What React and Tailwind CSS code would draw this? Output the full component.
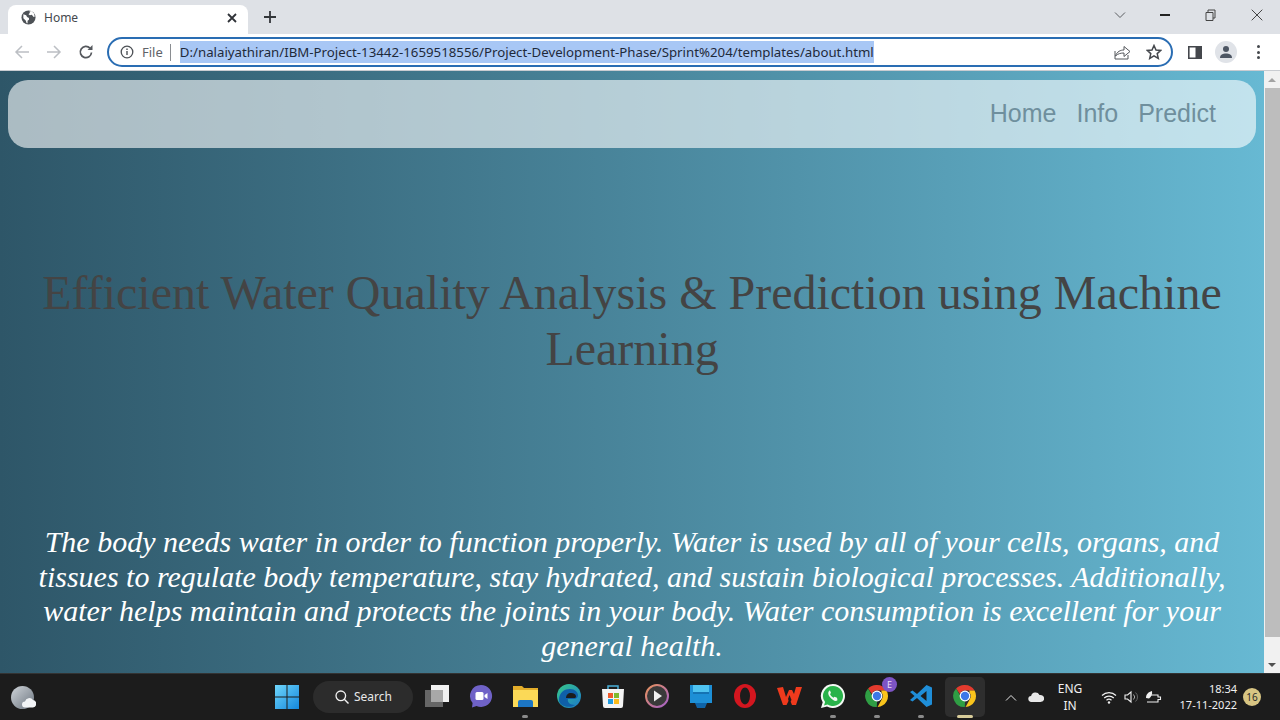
import React from "react";

const Cell = ({ children, dot, active }) => (
  <div className="relative flex h-[40px] w-[44px] items-center justify-center">
    {active && <div className="absolute inset-y-0 left-[2px] right-[2px] rounded-[5px] bg-[#2e2e2e]" />}
    <div className="relative top-[-1px] flex items-center justify-center">{children}</div>
    {dot && !active && <div className="absolute bottom-[-1px] left-[19px] h-[3px] w-[6px] rounded-full bg-[#8b8b8b]" />}
    {active && <div className="absolute bottom-[-1px] left-[14px] h-[3px] w-[16px] rounded-full bg-[#d8cc9a]" />}
  </div>
);

const ChromeLogo = ({ size = 24 }) => (
  <svg width={size} height={size} viewBox="0 0 24 24">
    <path d="M12 1a11 11 0 0 1 9.530 5.500H12a5.500 5.500 0 0 0-5.100 3.400L3.100 4.600A11 11 0 0 1 12 1z" fill="#e33b2e" />
    <path d="M21.530 6.500A11 11 0 0 1 12.600 23l4.200-7.800A5.500 5.500 0 0 0 16.800 9l-.6-2.500z" fill="#f9c41c" />
    <path d="M3.100 4.600l4.300 7.400L12 17.500l-.2 5.500A11 11 0 0 1 3.100 4.600z" fill="#2f9e44" />
    <circle cx="12" cy="12" r="5.400" fill="#fff" />
    <circle cx="12" cy="12" r="4.200" fill="#3b78e7" />
  </svg>
);

export default function App() {
  return (
    <div className="flex h-[720px] w-[1280px] flex-col overflow-hidden bg-[#dee1e6] font-['Noto_Sans',sans-serif]">
      {/* Tab strip */}
      <div className="flex h-[34px] shrink-0 items-end bg-[#dee1e6]">
        <div className="ml-[8px] flex h-[29px] w-[240px] items-center rounded-t-[8px] bg-white pb-[4px] pl-[13px] pr-[10px]">
          <svg width="15" height="15" viewBox="0 0 16 16">
            <circle cx="8" cy="8" r="7.500" fill="#4d5156" />
            <path d="M2.500 4.500l3 1 1 2 2 1v2l-1.500 1v2.500l-1 .2-1-3-2.500-2.500zM9 1.500l.5 1.500-1.500 1.500 1.500 1 2-.5 2 2.500 1.200-.5-1-3.500-2.500-2.500z" fill="#fff" />
          </svg>
          <span className="ml-[8px] text-[12px] leading-none text-[#45494e]">Home</span>
          <svg className="ml-auto" width="12" height="12" viewBox="0 0 12 12">
            <path d="M2 2l8 8M10 2l-8 8" stroke="#2f3237" strokeWidth="1.800" />
          </svg>
        </div>
        <svg className="mb-[10px] ml-[15px]" width="14" height="14" viewBox="0 0 14 14">
          <path d="M7 1v12M1 7h12" stroke="#33363a" strokeWidth="1.800" />
        </svg>
        <div className="ml-auto mb-[13px] flex items-center">
          <svg width="12" height="8" viewBox="0 0 12 8"><path d="M1 1.500l5 5 5-5" fill="none" stroke="#5a5d61" strokeWidth="1" /></svg>
          <div className="ml-[34px] h-[1.500px] w-[10px] bg-[#222]" />
          <svg className="ml-[35px]" width="11" height="12" viewBox="0 0 11 12"><path d="M1 3.500h7v8h-7zM3 3.500v-2.500h7v8h-2" fill="none" stroke="#444" strokeWidth="1" /></svg>
          <svg className="ml-[35px] mr-[17px]" width="12" height="12" viewBox="0 0 12 12"><path d="M.7.700l10.600 10.600M11.300.700L.7 11.300" stroke="#444" strokeWidth="1" /></svg>
        </div>
      </div>

      {/* Toolbar */}
      <div className="flex h-[37px] shrink-0 items-center border-b border-[#c9ccd1] bg-white pl-[14px]">
        <svg width="16" height="16" viewBox="0 0 16 16"><path d="M15 8H2M8 2L2 8l6 6" fill="none" stroke="#bcbfc4" strokeWidth="1.500" /></svg>
        <svg className="ml-[16px]" width="16" height="16" viewBox="0 0 16 16"><path d="M1 8h13M8 2l6 6-6 6" fill="none" stroke="#bcbfc4" strokeWidth="1.500" /></svg>
        <svg className="ml-[16px]" width="16" height="16" viewBox="0 0 16 16"><path d="M13.500 8.500a5.600 5.600 0 1 1-1.500-4.300" fill="none" stroke="#55585d" strokeWidth="1.700" /><path d="M14.500 1v5h-5z" fill="#55585d" /></svg>
        <div className="ml-[13px] flex h-[30px] w-[1066px] items-center rounded-full border-[2px] border-[#2a6db3] bg-white pl-[11px]">
          <svg width="14" height="14" viewBox="0 0 14 14"><circle cx="7" cy="7" r="5.800" fill="none" stroke="#4d5156" strokeWidth="1.300" /><path d="M7 6v4M7 3.600v1.300" stroke="#4d5156" strokeWidth="1.400" /></svg>
          <span className="ml-[8px] text-[13px] leading-none text-[#5f6368]">File</span>
          <div className="ml-[7px] h-[17px] w-px bg-[#8a8d91]" />
          <span className="ml-[9px] flex h-[22px] items-center bg-[#a8c7f5] pt-[1px] text-[13.260px] leading-none whitespace-nowrap text-[#1f2a3a]">D:/nalaiyathiran/IBM-Project-13442-1659518556/Project-Development-Phase/Sprint%204/templates/about.html</span>
          <svg className="ml-auto" width="17" height="16" viewBox="0 0 17 16"><path d="M1 7v8h13v-4M1.500 12C3 7.500 6.500 6 10 6V2.500L16 7.500 10 12.500V9C7 9 4 9.500 1.500 12z" fill="none" stroke="#55585d" strokeWidth="1" /></svg>
          <svg className="ml-[15px] mr-[9px]" width="16" height="16" viewBox="0 0 16 16"><path d="M8 1.500l2 4.500 4.800.4-3.600 3.200 1.100 4.800L8 11.900l-4.300 2.500 1.100-4.800L1.200 6.400 6 6z" fill="none" stroke="#44474c" strokeWidth="1.500" /></svg>
        </div>
        <svg className="ml-[15px]" width="14" height="13" viewBox="0 0 14 13"><path d="M.8.800h12.400v11.400H.8z" fill="none" stroke="#44474c" strokeWidth="1.600" /><path d="M7.500 1h5.500v11H7.500z" fill="#44474c" /></svg>
        <div className="ml-[13px] flex h-[22px] w-[22px] items-center justify-center rounded-full bg-[#e0e3e8]">
          <svg width="14" height="14" viewBox="0 0 14 14"><circle cx="7" cy="4" r="3" fill="#4d5663" /><path d="M1 13c0-3.500 3-4.500 6-4.500s6 1 6 4.500z" fill="#4d5663" /></svg>
        </div>
        <div className="ml-[20px] flex flex-col gap-[2.500px]">
          <div className="h-[3px] w-[3px] rounded-full bg-[#44474c]" />
          <div className="h-[3px] w-[3px] rounded-full bg-[#44474c]" />
          <div className="h-[3px] w-[3px] rounded-full bg-[#44474c]" />
        </div>
      </div>

      {/* Viewport */}
      <div className="flex min-h-0 flex-1">
        <main className="w-[1264px] overflow-hidden bg-gradient-to-r from-[#2e5668] to-[#67b9d3] px-[8px] pt-[9px]">
          <nav className="flex h-[68px] items-center justify-end gap-[20px] rounded-[20px] bg-white/60 pr-[40px] font-['Liberation_Sans',sans-serif] text-[25px] text-[#6f8f9d]">
            <a>Home</a>
            <a>Info</a>
            <a>Predict</a>
          </nav>
          <h1 className="mt-[117px] text-center font-['Liberation_Serif',serif] text-[48px] leading-[56px] font-normal text-[#444444]">
            Efficient Water Quality Analysis &amp; Prediction using Machine Learning
          </h1>
          <p className="mt-[148px] text-center font-['Liberation_Serif',serif] text-[30px] leading-[34.700px] text-white italic">
            The body needs water in order to function properly. Water is used by all of your cells, organs, and tissues to regulate body temperature, stay hydrated, and sustain biological processes. Additionally, water helps maintain and protects the joints in your body. Water consumption is excellent for your general health.
          </p>
        </main>
        <div className="flex w-[16px] flex-col items-center bg-[#f1f1f1]">
          <div className="flex h-[17px] items-center justify-center">
            <div className="h-0 w-0 border-x-[4px] border-b-[4px] border-x-transparent border-b-[#a3a3a3]" />
          </div>
          <div className="h-[549px] w-[15px] bg-[#bdbdbd]" />
          <div className="mt-auto flex h-[17px] items-center justify-center">
            <div className="h-0 w-0 border-x-[4px] border-t-[4px] border-x-transparent border-t-[#505050]" />
          </div>
        </div>
      </div>

      {/* Taskbar */}
      <div className="flex h-[47px] shrink-0 items-center border-t border-[#333] bg-[#1c1c1c] pl-[11px] text-white">
        <div className="relative h-[23px] w-[23px]">
          <div className="absolute inset-0 rounded-full bg-gradient-to-br from-[#d0d5da] to-[#6d7680]" />
          <svg className="absolute bottom-[1px] right-[-2px]" width="14" height="11" viewBox="0 0 14 11"><path d="M3 10.500a3 3 0 0 1 0-6 4.500 4.500 0 0 1 8-1.500 3.800 3.800 0 0 1 0 7.500z" fill="#f2f4f6" /></svg>
        </div>
        <div className="ml-[231px] flex w-[44px] justify-center">
          <svg width="24" height="24" viewBox="0 0 24 24">
            <defs><linearGradient id="w" x1="0" y1="0" x2="1" y2="1"><stop offset="0" stopColor="#6fd6fb" /><stop offset="1" stopColor="#1487dc" /></linearGradient></defs>
            <path d="M0 0h11.500v11.500H0zM12.500 0H24v11.500H12.500zM0 12.500h11.500V24H0zM12.500 12.500H24V24H12.500z" fill="url(#w)" />
          </svg>
        </div>
        <div className="ml-[4px] flex h-[32px] w-[100px] items-center rounded-full bg-[#2c2c2c] pl-[22px]">
          <svg width="14" height="14" viewBox="0 0 14 14"><circle cx="5.800" cy="5.800" r="4.800" fill="none" stroke="#f2f2f2" strokeWidth="1.300" /><path d="M9.300 9.300l4.200 4.200" stroke="#f2f2f2" strokeWidth="1.400" /></svg>
          <span className="ml-[5px] text-[12px] leading-none text-[#e8e8e8]">Search</span>
        </div>
        <div className="ml-[2px] flex">
          <Cell>
            <svg width="24" height="22" viewBox="0 0 24 22"><rect x="6" y="0" width="18" height="17" fill="#f0f0f0" /><rect x="0" y="5" width="18" height="17" fill="#666" /><rect x="6" y="5" width="12" height="12" fill="#a8a8a8" /></svg>
          </Cell>
          <Cell>
            <svg width="24" height="24" viewBox="0 0 24 24"><path d="M12 1a11 11 0 1 1-4.500 21L3 23.500l.6-4.500A11 11 0 0 1 12 1z" fill="#6f62c7" /><rect x="6.500" y="8" width="8" height="8" rx="1.500" fill="#fff" /><path d="M15.500 11l3-2v6l-3-2z" fill="#fff" /></svg>
          </Cell>
          <Cell dot>
            <svg width="25" height="24" viewBox="0 0 25 24"><path d="M0 2h9l2 2h14v19H0z" fill="#e3ad2a" /><path d="M0 6h25v17H0z" fill="#fbd957" /><path d="M7 16h11a2 2 0 0 1 2 2v5H5v-5a2 2 0 0 1 2-2z" fill="#1c76c4" /></svg>
          </Cell>
          <Cell>
            <svg width="26" height="26" viewBox="0 0 26 26"><defs><linearGradient id="e" x1="0" y1="0" x2="1" y2="1"><stop offset="0" stopColor="#37c98b" /><stop offset="1" stopColor="#1a78c9" /></linearGradient></defs><circle cx="13" cy="13" r="12" fill="url(#e)" /><path d="M3 17C3 9 9 6 14 6s8 3 8 6.500c0 2-2 3.500-4 3.500h-6c-1 3 2 6 7 6 -6 4-16 1-16-5z" fill="#0f5fa8" /><path d="M10 15c0-3 2-5 5-5s5 1.500 5 3.500c0 1-1 1.500-2 1.500z" fill="#1c1c1c" /></svg>
          </Cell>
          <Cell>
            <svg width="24" height="26" viewBox="0 0 24 26"><path d="M1 6h22l-1 17a2 2 0 0 1-2 2H4a2 2 0 0 1-2-2z" fill="#f3f3f3" /><path d="M7 6V3h10v3" fill="none" stroke="#4ab0d9" strokeWidth="1.500" /><path d="M7 10h5v5H7z" fill="#ef5a2a" /><path d="M13 10h5v5h-5z" fill="#7fba2e" /><path d="M7 16h5v5H7z" fill="#1f9be0" /><path d="M13 16h5v5h-5z" fill="#fbbb1b" /></svg>
          </Cell>
          <Cell>
            <svg width="26" height="26" viewBox="0 0 26 26"><defs><linearGradient id="p" x1="0" y1="0" x2="1" y2="1"><stop offset="0" stopColor="#e8935b" /><stop offset="1" stopColor="#a35fc9" /></linearGradient></defs><circle cx="13" cy="13" r="11" fill="#3a3a3a" stroke="url(#p)" strokeWidth="2" /><path d="M10 7.500l8 5.500-8 5.500z" fill="#f2f2f2" /></svg>
          </Cell>
          <Cell>
            <svg width="22" height="26" viewBox="0 0 22 26"><path d="M0 2h22v18H0z" fill="#1d8fd6" /><path d="M3 2h16v7H3z" fill="#4fc3f0" /><path d="M3 9h16v2H3z" fill="#1573b3" /><path d="M5 20h12l-2 5H7z" fill="#0f64a8" /></svg>
          </Cell>
          <Cell>
            <svg width="24" height="26" viewBox="0 0 24 26"><ellipse cx="12" cy="13" rx="11" ry="12" fill="#d3161f" /><ellipse cx="12" cy="13" rx="5" ry="8.500" fill="#1c1c1c" /></svg>
          </Cell>
          <Cell>
            <svg width="25" height="20" viewBox="0 0 25 20"><path d="M0 2l6-1 3 10 3-7h3l2 4 2-7h6l-6 18h-4l-2.500-6-3 6H6z" fill="#ef3a1d" /><path d="M12.500 9l2 5-2 3-1.500-4z" fill="#1c1c1c" /></svg>
          </Cell>
          <Cell dot>
            <svg width="26" height="26" viewBox="0 0 26 26"><path d="M13 1a12 12 0 1 1-6 22.400L1 25l1.700-5.700A12 12 0 0 1 13 1z" fill="#f4f8f4" /><path d="M13 3a10 10 0 1 1-5.400 18.400L4 22.500l1.100-3.400A10 10 0 0 1 13 3z" fill="#29b34a" /><path d="M9.500 7.500c-2 1.500-1.500 4.500 1 7.300s5 4 7 2.500l-.5-2.500-2.500-1-1 1c-1.500-.8-2.800-2.200-3.500-3.800l1-1-1-2.500z" fill="#f4f8f4" /></svg>
          </Cell>
          <Cell dot>
            <div className="relative">
              <ChromeLogo size={24} />
              <div className="absolute right-[-8px] top-[-7px] flex h-[15px] w-[15px] items-center justify-center rounded-full bg-[#7d54c4] text-[9px] leading-none text-[#e8def8]">E</div>
            </div>
          </Cell>
          <Cell dot>
            <svg width="24" height="24" viewBox="0 0 24 24"><path d="M17.500 1L8 10 3.500 6.500 1 8l4.500 4L1 16l2.500 1.500L8 14l9.500 9 5.500-2.500V3.500z" fill="#1f8ed8" /><path d="M17.500 7v10l-6-5z" fill="#1c1c1c" /></svg>
          </Cell>
          <Cell active>
            <ChromeLogo size={24} />
          </Cell>
        </div>
        <svg className="ml-[18px]" width="12" height="7" viewBox="0 0 12 7"><path d="M1 6.500l5-5 5 5" fill="none" stroke="#e5e5e5" strokeWidth="1" /></svg>
        <svg className="ml-[11px]" width="16" height="10" viewBox="0 0 16 10"><path d="M3.500 10a3 3 0 0 1-.4-6A4.500 4.500 0 0 1 11.500 3 3.500 3 0 0 1 12.500 10z" fill="#e8e8e8" /></svg>
        <div className="ml-[13px] w-[26px] text-center text-[12px] leading-[17px] text-[#f0f0f0]">
          <div>ENG</div>
          <div>IN</div>
        </div>
        <svg className="ml-[18px]" width="16" height="13" viewBox="0 0 16 13"><path d="M1 4.500a10 10 0 0 1 14 0M3.200 7a7 7 0 0 1 9.600 0M5.500 9.300a3.800 3.800 0 0 1 5 0" fill="none" stroke="#f0f0f0" strokeWidth="1.200" /><circle cx="8" cy="11.500" r="1.200" fill="#f0f0f0" /></svg>
        <svg className="ml-[7px]" width="16" height="14" viewBox="0 0 16 14"><path d="M1 5h2.500L7 2v10L3.500 9H1z" fill="none" stroke="#f0f0f0" strokeWidth="1.100" /><path d="M9.500 4.500a3.500 3.500 0 0 1 0 5" fill="none" stroke="#aaa" strokeWidth="1" /><path d="M11.500 2.500a6 6 0 0 1 0 9" fill="none" stroke="#666" strokeWidth="1" /></svg>
        <svg className="ml-[5px]" width="17" height="15" viewBox="0 0 17 15"><path d="M5 5h8v2h2.500v2.500H13V12H2" fill="none" stroke="#f0f0f0" strokeWidth="1.100" /><path d="M1 8C1 4 3.500 2 7 1c.5 3-.5 6-3 7.500z" fill="#f0f0f0" /></svg>
        <div className="ml-[17px] w-[58px] whitespace-nowrap text-right text-[11px] leading-[16px] text-[#f0f0f0]">
          <div>18:34</div>
          <div>17-11-2022</div>
        </div>
        <div className="ml-[6px] flex h-[18px] w-[18px] items-center justify-center rounded-full bg-[#d8c583] text-[10px] leading-none text-[#2a2a2a]">16</div>
      </div>
    </div>
  );
}
